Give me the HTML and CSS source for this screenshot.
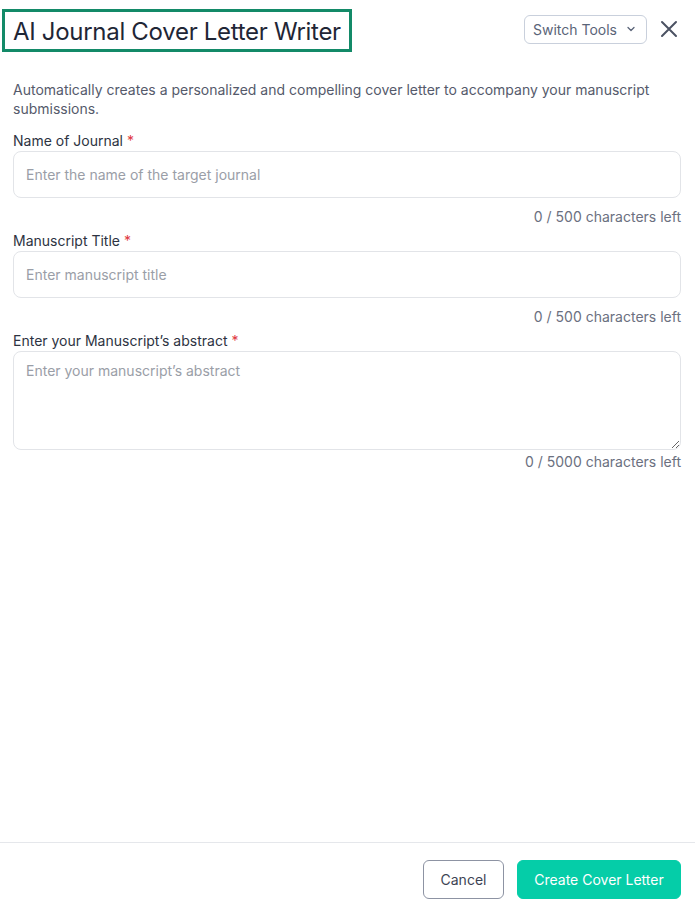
FILE: index.html
```html
<html>
    <head>
        <title>AI Journal Cover Letter Writer</title>
        <link rel="stylesheet" href="styles.css">
    </head>
    <body>
        <div class = 'panel'>
            <div class = 'topbar'>
                <h1 class = 'title'>AI Journal Cover Letter Writer</h1>
                <div class = 'top-actions'>
                    <button class = 'switch'>Switch Tools
                        <svg width="12" height="12" viewBox="0 0 12 12"><path d="M3 4.5 L6 7.5 L9 4.5" fill="none" stroke="#5a6478" stroke-width="1.3" stroke-linecap="round" stroke-linejoin="round"/></svg>
                    </button>
                    <button class = 'close'>
                        <svg width="18" height="18" viewBox="0 0 18 18"><path d="M2 2 L16 16 M16 2 L2 16" stroke="#4b5263" stroke-width="2" stroke-linecap="round"/></svg>
                    </button>
                </div>
            </div>
            <div class = 'content'>
                <p class = 'desc'>Automatically creates a personalized and compelling cover letter to accompany your manuscript submissions.</p>

                <div class = 'field'>
                    <label>Name of Journal <span class = 'req'>*</span></label>
                    <input type = 'text' class = 'inp' placeholder = 'Enter the name of the target journal'>
                    <div class = 'count'>0 / 500 characters left</div>
                </div>

                <div class = 'field'>
                    <label>Manuscript Title <span class = 'req'>*</span></label>
                    <input type = 'text' class = 'inp' placeholder = 'Enter manuscript title'>
                    <div class = 'count'>0 / 500 characters left</div>
                </div>

                <div class = 'field'>
                    <label>Enter your Manuscript’s abstract <span class = 'req'>*</span></label>
                    <textarea class = 'inp area' placeholder = 'Enter your manuscript’s abstract'></textarea>
                    <div class = 'count'>0 / 5000 characters left</div>
                </div>
            </div>
            <div class = 'footer'>
                <button class = 'btn cancel'>Cancel</button>
                <button class = 'btn create'>Create Cover Letter</button>
            </div>
        </div>
    </body>
</html>
```

FILE: styles.css
```css
body {
    margin : 0;
    font-family: Inter, "Noto Sans", sans-serif;
    color : #2d3342;
    background : #fff;
}
button {
    font-family: inherit;
    cursor : pointer;
}
.panel {
    height : 100vh;
    display : flex;
    flex-direction : column;
}
.topbar {
    display : flex;
    align-items : center;
    justify-content : space-between;
    padding : 9px 16px 0px 2px;
}
.title {
    margin : 0;
    font-size : 24px;
    font-weight : 400;
    letter-spacing : -0.3px;
    color : #1f2636;
    border : 3px solid #138a68;
    padding : 4px 8px;
    height : 43px;
    box-sizing : border-box;
    line-height : 32px;
}
.top-actions {
    display : flex;
    align-items : center;
    gap : 12px;
    margin-top : -3px;
}
.switch {
    height : 29px;
    border : 1px solid #c9d0dc;
    border-radius : 6px;
    background : #fff;
    color : #5a6478;
    font-size : 14px;
    padding : 0 9px 0 8px;
    display : flex;
    align-items : center;
    gap : 8px;
}
.close {
    border : none;
    background : none;
    padding : 0;
    width : 20px;
    height : 20px;
    display : flex;
    align-items : center;
    justify-content : center;
}
.content {
    flex : 1;
    padding : 0 14px 0 13px;
}
.desc {
    margin : 28px 0 13px 0;
    font-size : 14px;
    line-height : 19px;
    color : #555a6b;
}
.field {
    margin-top : 4px;
    display : flex;
    flex-direction : column;
}
.field label {
    font-size : 14px;
    line-height : 20px;
    color : #2d3342;
    margin-bottom : 0;
}
.req {
    color : #e0383e;
}
.inp {
    height : 47px;
    border : 1px solid #e2e4e8;
    border-radius : 8px;
    padding : 0 12px;
    font-family: inherit;
    font-size : 14px;
    color : #2d3342;
    outline : none;
}
.inp::placeholder {
    color : #9a9ea7;
}
.area {
    height : 99px;
    padding : 10px 12px;
    resize : vertical;
}
.count {
    text-align : right;
    font-size : 14px;
    line-height : 20px;
    margin-top : 9px;
    color : #6b7080;
}
.field:last-child .count {
    margin-top : 2px;
}
.footer {
    border-top : 1px solid #e5e7eb;
    display : flex;
    justify-content : flex-end;
    gap : 13px;
    padding : 17px 14px 12px 0;
}
.btn {
    height : 39px;
    border-radius : 6px;
    font-size : 14px;
    padding : 0 16px;
}
.cancel {
    background : #fff;
    border : 1px solid #8d93a3;
    color : #3d4454;
    width : 81px;
}
.create {
    background : #05cda8;
    border : 1px solid #05cda8;
    color : #fff;
    width : 164px;
}
```
